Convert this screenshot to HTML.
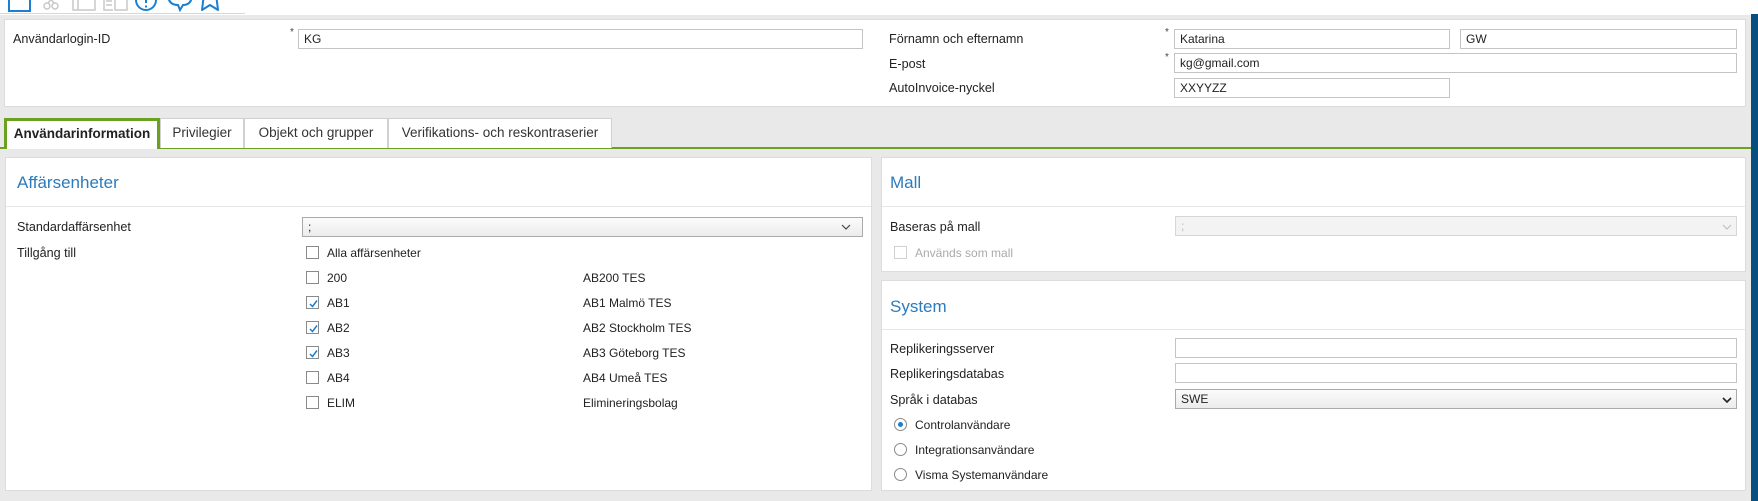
<!DOCTYPE html>
<html><head><meta charset="utf-8"><style>
*{box-sizing:border-box;margin:0;padding:0}
body{width:1758px;height:501px;overflow:hidden;background:#fff;font-family:"Liberation Sans",sans-serif;font-size:12px;color:#222;position:relative}
.a{position:absolute}
.bg{left:0;top:15px;width:1751px;height:486px;background:#e9e9e9}
.side{left:1751px;top:14px;width:7px;height:487px;background:#064f7e}
.pnl{background:#fff;border:1px solid #dcdcdc}
.in{position:absolute;border:1px solid #c4c4c4;background:#fff;height:20px;padding:2px 5px;font-size:12px;line-height:14px}
.lbl{position:absolute;line-height:14px;transform:translateY(-7px)}
.hd{font-size:12.6px}
.star{position:absolute;font-size:10px;color:#444}
.tab{position:absolute;top:118px;height:30px;background:#fff;border:1px solid #d0d0d0;border-bottom:none;font-size:13.5px;line-height:28px;text-align:center;color:#333}
.title{position:absolute;font-size:17px;color:#2b7bbd;line-height:20px;transform:translateY(-10px)}
.hl{position:absolute;height:1px;background:#e6e6e6}
.cb{position:absolute;width:13px;height:13px;border:1px solid #8a8a8a;background:#fff;transform:translateY(-7px)}
.cb svg{position:absolute;left:1px;top:1px}
.sel{background:linear-gradient(#fbfbfb,#ececec);border:1px solid #aaa}
.rad{position:absolute;width:13px;height:13px;border:1px solid #8a8a8a;border-radius:50%;background:#fff;transform:translate(-6px,-7px)}
</style></head><body>
<svg class="a" style="left:0;top:0" width="250" height="16">
 <rect x="9" y="-8" width="21" height="19" fill="none" stroke="#1a7fd0" stroke-width="2"/>
 <circle cx="47" cy="6" r="3" fill="none" stroke="#c8c8c8" stroke-width="1.5"/><circle cx="55" cy="6" r="3" fill="none" stroke="#c8c8c8" stroke-width="1.5"/><path d="M48 3 L54 -4 M54 3 L48 -4" stroke="#c8c8c8" stroke-width="1.5"/>
 <path d="M73 -2 V10 H89 M78 -4 H95 V10 H78 Z" fill="none" stroke="#c8c8c8" stroke-width="1.5"/>
 <path d="M104 -4 V10 H113 M106 1 H112 M106 5 H112 M115 -2 H127 V10 H115 Z" fill="none" stroke="#c8c8c8" stroke-width="1.5"/>
 <circle cx="146" cy="0" r="10" fill="none" stroke="#1a7fd0" stroke-width="2"/><path d="M146 -3 V3 M146 5.5 V7.5" stroke="#1a7fd0" stroke-width="2"/>
 <path d="M168 -6 Q168 5 178 5 L180 10 L183 5 Q192 5 192 -6" fill="none" stroke="#1a7fd0" stroke-width="2"/>
 <path d="M204 -6 L202 10 L210 5 L218 10 L216 -6" fill="none" stroke="#1a7fd0" stroke-width="2" stroke-linejoin="round"/>
</svg>
<div class="a bg"></div>
<div class="a" style="left:0;top:13px;width:245px;height:1px;background:#d8d8d8"></div>
<div class="a side"></div>

<div class="a pnl" style="left:4px;top:19px;width:1742px;height:88px"></div>
<div class="lbl hd" style="left:13px;top:39px">Användarlogin-ID</div>
<div class="star" style="left:290px;top:27px">*</div>
<div class="in" style="left:298px;top:29px;width:565px">KG</div>
<div class="lbl hd" style="left:889px;top:39px">Förnamn och efternamn</div>
<div class="lbl hd" style="left:889px;top:64px">E-post</div>
<div class="lbl hd" style="left:889px;top:88px">AutoInvoice-nyckel</div>
<div class="star" style="left:1165px;top:27px">*</div>
<div class="star" style="left:1165px;top:52px">*</div>
<div class="in" style="left:1174px;top:29px;width:276px">Katarina</div>
<div class="in" style="left:1460px;top:29px;width:277px">GW</div>
<div class="in" style="left:1174px;top:53px;width:563px">kg@gmail.com</div>
<div class="in" style="left:1174px;top:78px;width:276px">XXYYZZ</div>

<div class="a" style="left:0;top:147px;width:1751px;height:2px;background:#6aa121"></div>
<div class="tab" style="left:4px;width:156px;border:3px solid #6aa121;border-bottom:none;font-weight:bold;color:#222;line-height:26px;height:31px">Användarinformation</div>
<div class="tab" style="left:160px;width:84px">Privilegier</div>
<div class="tab" style="left:244px;width:144px">Objekt och grupper</div>
<div class="tab" style="left:388px;width:224px">Verifikations- och reskontraserier</div>

<div class="a pnl" style="left:5px;top:157px;width:867px;height:334px"></div>
<div class="title" style="left:17px;top:183px">Affärsenheter</div>
<div class="hl" style="left:6px;top:206px;width:865px"></div>
<div class="lbl hd" style="left:17px;top:227px">Standardaffärsenhet</div>
<div class="in sel" style="left:302px;top:217px;width:561px">;</div>
<svg class="a" style="left:841px;top:224px" width="10" height="6"><path d="M1 1 L5 5 L9 1" fill="none" stroke="#444" stroke-width="1.2"/></svg>
<div class="lbl hd" style="left:17px;top:253px">Tillgång till</div>

<div class="cb" style="left:306px;top:253px"></div><div class="lbl" style="left:327px;top:253px">Alla affärsenheter</div>
<div class="cb" style="left:306px;top:278px"></div><div class="lbl" style="left:327px;top:278px">200</div><div class="lbl" style="left:583px;top:278px">AB200 TES</div>
<div class="cb" style="left:306px;top:303px"><svg width="11" height="11"><path d="M2 6 L4.5 8.5 L9 2.5" fill="none" stroke="#1a7fd0" stroke-width="1.5"/></svg></div><div class="lbl" style="left:327px;top:303px">AB1</div><div class="lbl" style="left:583px;top:303px">AB1 Malmö TES</div>
<div class="cb" style="left:306px;top:328px"><svg width="11" height="11"><path d="M2 6 L4.5 8.5 L9 2.5" fill="none" stroke="#1a7fd0" stroke-width="1.5"/></svg></div><div class="lbl" style="left:327px;top:328px">AB2</div><div class="lbl" style="left:583px;top:328px">AB2 Stockholm TES</div>
<div class="cb" style="left:306px;top:353px"><svg width="11" height="11"><path d="M2 6 L4.5 8.5 L9 2.5" fill="none" stroke="#1a7fd0" stroke-width="1.5"/></svg></div><div class="lbl" style="left:327px;top:353px">AB3</div><div class="lbl" style="left:583px;top:353px">AB3 Göteborg TES</div>
<div class="cb" style="left:306px;top:378px"></div><div class="lbl" style="left:327px;top:378px">AB4</div><div class="lbl" style="left:583px;top:378px">AB4 Umeå TES</div>
<div class="cb" style="left:306px;top:403px"></div><div class="lbl" style="left:327px;top:403px">ELIM</div><div class="lbl" style="left:583px;top:403px">Elimineringsbolag</div>

<div class="a pnl" style="left:881px;top:157px;width:865px;height:115px"></div>
<div class="title" style="left:890px;top:183px">Mall</div>
<div class="hl" style="left:882px;top:206px;width:863px"></div>
<div class="lbl hd" style="left:890px;top:227px">Baseras på mall</div>
<div class="in" style="left:1175px;top:216px;width:562px;background:#f3f3f3;border-color:#d6d6d6;color:#bbb">;</div>
<svg class="a" style="left:1722px;top:224px" width="10" height="6"><path d="M1 1 L5 5 L9 1" fill="none" stroke="#bbb" stroke-width="1"/></svg>
<div class="cb" style="left:894px;top:253px;border-color:#d0d0d0"></div><div class="lbl" style="left:915px;top:253px;color:#aaa">Används som mall</div>

<div class="a pnl" style="left:881px;top:280px;width:865px;height:211px"></div>
<div class="title" style="left:890px;top:307px">System</div>
<div class="hl" style="left:882px;top:329px;width:863px"></div>
<div class="lbl hd" style="left:890px;top:349px">Replikeringsserver</div>
<div class="in" style="left:1175px;top:338px;width:562px"></div>
<div class="lbl hd" style="left:890px;top:374px">Replikeringsdatabas</div>
<div class="in" style="left:1175px;top:363px;width:562px"></div>
<div class="lbl hd" style="left:890px;top:400px">Språk i databas</div>
<div class="in sel" style="left:1175px;top:389px;width:562px">SWE</div>
<svg class="a" style="left:1722px;top:397px" width="10" height="6"><path d="M1 1 L5 5 L9 1" fill="none" stroke="#222" stroke-width="1.6"/></svg>
<div class="rad" style="left:900px;top:425px"><div style="position:absolute;left:3px;top:3px;width:5px;height:5px;border-radius:50%;background:#1a7fd0"></div></div><div class="lbl" style="left:915px;top:425px">Controlanvändare</div>
<div class="rad" style="left:900px;top:450px"></div><div class="lbl" style="left:915px;top:450px">Integrationsanvändare</div>
<div class="rad" style="left:900px;top:475px"></div><div class="lbl" style="left:915px;top:475px">Visma Systemanvändare</div>
</body></html>
